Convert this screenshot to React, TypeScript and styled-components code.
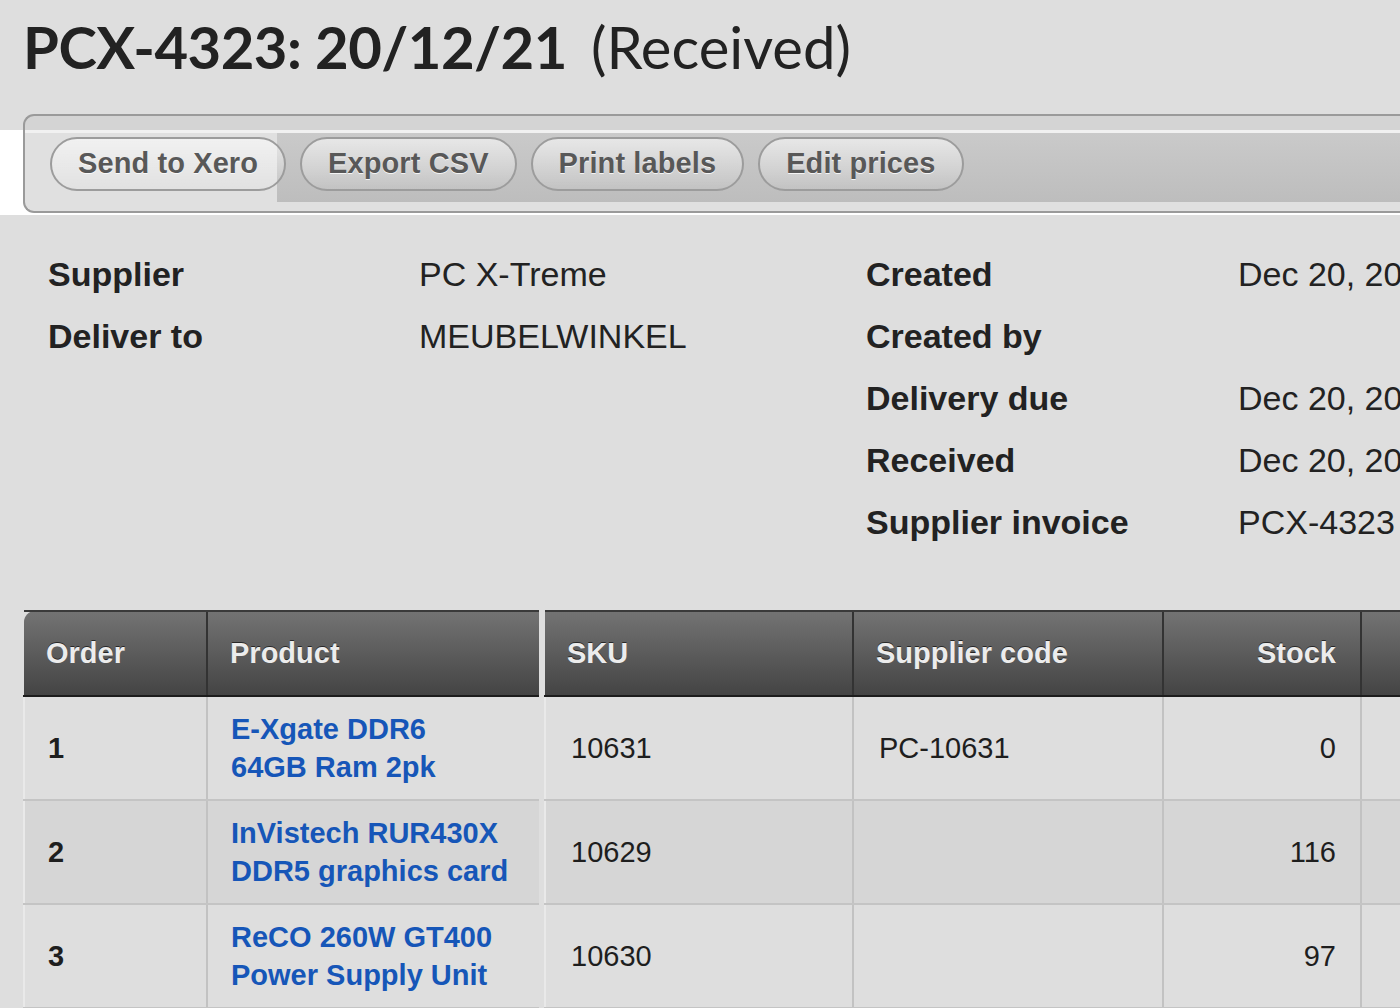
import React from "react";
import styled, { createGlobalStyle } from "styled-components";

const GlobalStyle = createGlobalStyle`
  html, body {
    margin: 0;
    padding: 0;
    background: #dedede;
    overflow: hidden;
    width: 1400px;
    height: 1008px;
  }
  body {
    font-family: "Liberation Sans", Arial, sans-serif;
    color: #222;
  }
  * { box-sizing: border-box; }
`;

const Page = styled.div`
  width: 1400px;
  height: 1008px;
  overflow: hidden;
`;

const TitleRow = styled.h1`
  margin: 0;
  padding: 9px 0 0 23px;
  height: 114px;
  display: flex;
  align-items: baseline;
  gap: 24px;
  font-family: Lato, "Open Sans", sans-serif;
  font-size: 58px;
  line-height: 76px;
  color: #222;
  white-space: nowrap;
`;

const TitleMain = styled.span`
  font-weight: 700;
  letter-spacing: -0.5px;
`;

const TitleStatus = styled.span`
  font-weight: 400;
`;

const ToolbarBand = styled.div`
  height: 101px;
  background: linear-gradient(to bottom, #dedede 0, #dedede 16px, #ffffff 16px, #ffffff 101px);
`;

const Toolbar = styled.div`
  margin-left: 23px;
  height: 99px;
  border: 2px solid #9a9a9a;
  border-right: none;
  border-radius: 11px 0 0 11px;
  display: flex;
  align-items: center;
  gap: 14px;
  padding-left: 25px;
  background:
    linear-gradient(to bottom, rgba(255,255,255,0.55), rgba(255,255,255,0.55)) 0 14px / 100% 3px no-repeat,
    linear-gradient(to bottom, #cacaca, #bdbdbd) 252px 17px / 100% 69px no-repeat,
    rgba(206, 206, 206, 0.64);
`;

const ToolButton = styled.button`
  height: 54px;
  padding: 0 26px;
  border: 2px solid #9c9c9c;
  border-radius: 27px;
  background: linear-gradient(to bottom, rgba(255,255,255,0.55), rgba(255,255,255,0.05));
  font-family: "Liberation Sans", Arial, sans-serif;
  font-weight: 700;
  font-size: 29px;
  letter-spacing: 0.1px;
  color: #585858;
  text-shadow: 0 1px 0 rgba(255, 255, 255, 0.8);
  white-space: nowrap;
  cursor: pointer;
`;

const InfoSection = styled.div`
  display: flex;
  margin-top: 28px;
  padding-left: 48px;
`;

const InfoBlock = styled.dl<{ $labelWidth: number; $valueWidth?: number }>`
  margin: 0;
  display: grid;
  grid-template-columns: ${(p) => p.$labelWidth}px ${(p) => (p.$valueWidth ? `${p.$valueWidth}px` : "auto")};
  grid-auto-rows: 62px;
  align-content: start;
  font-size: 34px;
`;

const InfoLabel = styled.dt`
  font-weight: 700;
  color: #222;
  line-height: 62px;
  white-space: nowrap;
`;

const InfoValue = styled.dd`
  margin: 0;
  color: #222;
  line-height: 62px;
  white-space: nowrap;
`;

const TableArea = styled.div`
  display: flex;
  gap: 5px;
  margin-top: 57px;
  margin-left: 23px;
  align-items: flex-start;
`;

const Table = styled.table<{ $cellPad: number }>`
  border-collapse: collapse;
  table-layout: fixed;
  flex-shrink: 0;
  --cell-pad: ${(p) => p.$cellPad}px;
`;

const HeadCell = styled.th<{ $align?: "left" | "right"; $rounded?: boolean }>`
  height: 85px;
  padding: 0 24px 0 22px;
  text-align: ${(p) => p.$align ?? "left"};
  font-size: 29px;
  font-weight: 700;
  color: #ececec;
  text-shadow: 0 -1px 0 rgba(0, 0, 0, 0.6);
  background: linear-gradient(to bottom, #737373, #444444);
  border-top: 2px solid #3a3a3a;
  border-bottom: 2px solid #1c1c1c;
  border-left: 2px solid #333;
  border-top-left-radius: ${(p) => (p.$rounded ? "11px" : "0")};
  white-space: nowrap;
  &:first-child {
    border-left: none;
  }
`;

const Row = styled.tr<{ $striped?: boolean }>`
  height: 104px;
  background: ${(p) => (p.$striped ? "#d6d6d6" : "#dedede")};
`;

const Cell = styled.td<{ $align?: "left" | "right"; $bold?: boolean }>`
  padding: 0 24px 0 var(--cell-pad);
  text-align: ${(p) => p.$align ?? "left"};
  font-size: 29px;
  font-weight: ${(p) => (p.$bold ? 700 : 400)};
  color: #1e1e1e;
  border-bottom: 2px solid #c4c4c4;
  border-left: 2px solid #c2c2c2;
  vertical-align: middle;
  &:first-child {
    border-left: 2px solid #e9e9e9;
  }
`;

const ProductLink = styled.a`
  display: block;
  color: #1656b8;
  font-weight: 700;
  line-height: 38px;
  text-decoration: none;
`;

type Item = {
  order: number;
  name: [string, string];
  sku: string;
  code: string;
  stock: number;
};

const items: Item[] = [
  { order: 1, name: ["E-Xgate DDR6", "64GB Ram 2pk"], sku: "10631", code: "PC-10631", stock: 0 },
  { order: 2, name: ["InVistech RUR430X", "DDR5 graphics card"], sku: "10629", code: "", stock: 116 },
  { order: 3, name: ["ReCO 260W GT400", "Power Supply Unit"], sku: "10630", code: "", stock: 97 },
];

export default function App() {
  return (
    <Page>
      <GlobalStyle />
      <TitleRow>
        <TitleMain>PCX-4323: 20/12/21</TitleMain>
        <TitleStatus>(Received)</TitleStatus>
      </TitleRow>

      <ToolbarBand>
        <Toolbar>
          <ToolButton>Send to Xero</ToolButton>
          <ToolButton>Export CSV</ToolButton>
          <ToolButton>Print labels</ToolButton>
          <ToolButton>Edit prices</ToolButton>
        </Toolbar>
      </ToolbarBand>

      <InfoSection>
        <InfoBlock $labelWidth={371} $valueWidth={447}>
          <InfoLabel>Supplier</InfoLabel>
          <InfoValue>PC X-Treme</InfoValue>
          <InfoLabel>Deliver to</InfoLabel>
          <InfoValue>MEUBELWINKEL</InfoValue>
        </InfoBlock>
        <InfoBlock $labelWidth={372}>
          <InfoLabel>Created</InfoLabel>
          <InfoValue>Dec 20, 2021</InfoValue>
          <InfoLabel>Created by</InfoLabel>
          <InfoValue></InfoValue>
          <InfoLabel>Delivery due</InfoLabel>
          <InfoValue>Dec 20, 2021</InfoValue>
          <InfoLabel>Received</InfoLabel>
          <InfoValue>Dec 20, 2021</InfoValue>
          <InfoLabel>Supplier invoice</InfoLabel>
          <InfoValue>PCX-4323</InfoValue>
        </InfoBlock>
      </InfoSection>

      <TableArea>
        <Table $cellPad={23}>
          <colgroup>
            <col style={{ width: 183 }} />
            <col style={{ width: 332 }} />
          </colgroup>
          <thead>
            <tr>
              <HeadCell $rounded>Order</HeadCell>
              <HeadCell>Product</HeadCell>
            </tr>
          </thead>
          <tbody>
            {items.map((it, i) => (
              <Row key={it.order} $striped={i % 2 === 1}>
                <Cell $bold>{it.order}</Cell>
                <Cell>
                  <ProductLink href="#">
                    {it.name[0]}
                    <br />
                    {it.name[1]}
                  </ProductLink>
                </Cell>
              </Row>
            ))}
          </tbody>
        </Table>

        <Table $cellPad={25}>
          <colgroup>
            <col style={{ width: 308 }} />
            <col style={{ width: 310 }} />
            <col style={{ width: 198 }} />
            <col style={{ width: 200 }} />
          </colgroup>
          <thead>
            <tr>
              <HeadCell>SKU</HeadCell>
              <HeadCell>Supplier code</HeadCell>
              <HeadCell $align="right">Stock</HeadCell>
              <HeadCell></HeadCell>
            </tr>
          </thead>
          <tbody>
            {items.map((it, i) => (
              <Row key={it.order} $striped={i % 2 === 1}>
                <Cell>{it.sku}</Cell>
                <Cell>{it.code}</Cell>
                <Cell $align="right">{it.stock}</Cell>
                <Cell></Cell>
              </Row>
            ))}
          </tbody>
        </Table>
      </TableArea>
    </Page>
  );
}
